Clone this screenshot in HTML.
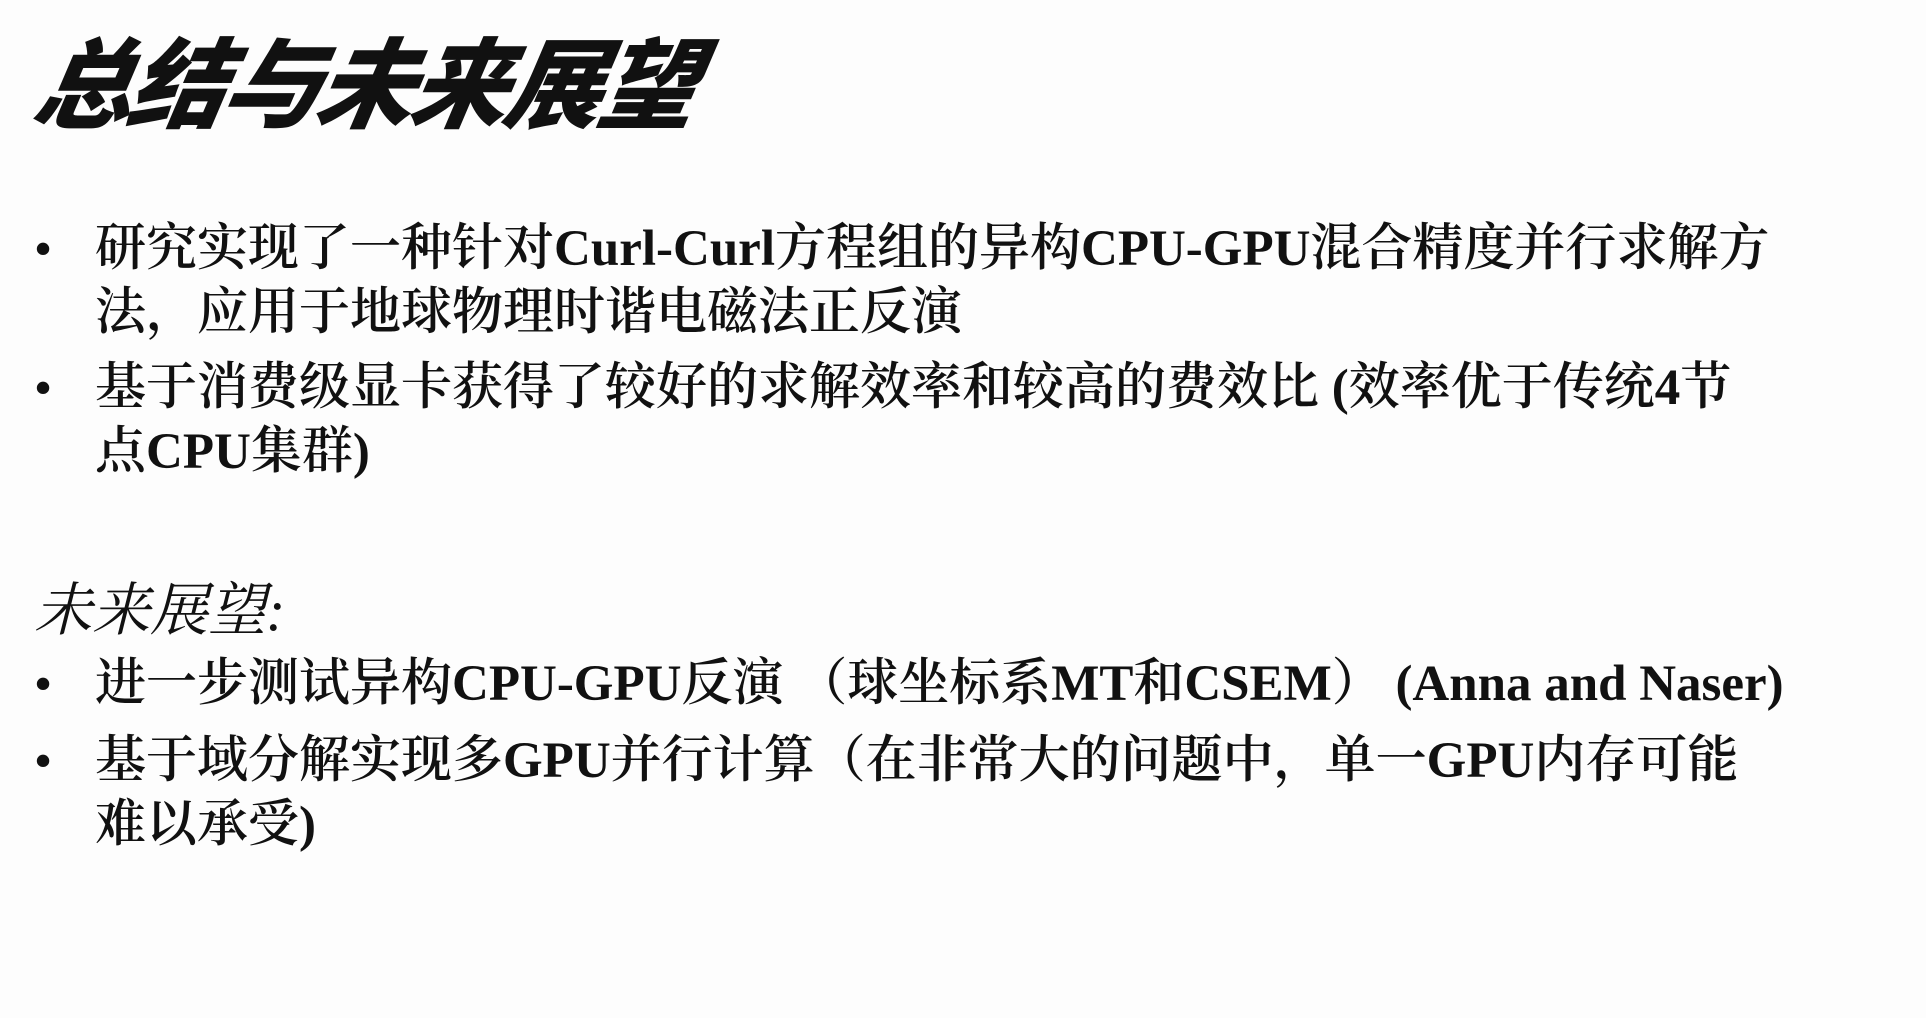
<!DOCTYPE html>
<html><head><meta charset="utf-8"><style>
body{margin:0;width:1926px;height:1018px;background:#fdfdfd;overflow:hidden;position:relative;font-family:"Liberation Serif","Noto Serif CJK SC",serif;color:#111}
.t{position:absolute;left:36px;top:28px;font-family:"Liberation Sans","Noto Sans CJK SC",sans-serif;font-weight:900;font-style:italic;font-size:98px;letter-spacing:-4px;transform:skewX(-10deg);line-height:1.2}
.p{position:absolute;left:95px;font-size:51px;line-height:64px;width:1800px;font-weight:600;white-space:nowrap}
.b{position:absolute;left:-60px;font-size:46px}
.h{position:absolute;left:34px;top:563px;font-size:58px;font-style:italic}
</style></head><body>
<div class="t">总结与未来展望</div>
<div class="p" style="top:217px"><span class="b">•</span>研究实现了一种针对Curl-Curl方程组的异构CPU-GPU混合精度并行求解方<br>法，应用于地球物理时谐电磁法正反演</div>
<div class="p" style="top:356px"><span class="b">•</span>基于消费级显卡获得了较好的求解效率和较高的费效比 (效率优于传统4节<br>点CPU集群)</div>
<div class="h">未来展望:</div>
<div class="p" style="top:652px"><span class="b">•</span>进一步测试异构CPU-GPU反演 （球坐标系MT和CSEM） (Anna and Naser)</div>
<div class="p" style="top:729px"><span class="b">•</span>基于域分解实现多GPU并行计算（在非常大的问题中，单一GPU内存可能<br>难以承受)</div>
</body></html>
